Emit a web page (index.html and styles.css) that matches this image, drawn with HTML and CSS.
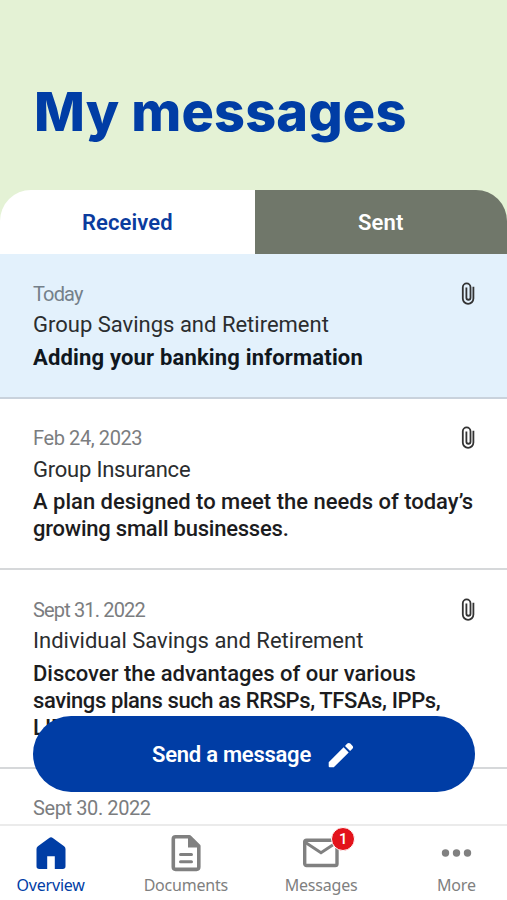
FILE: index.html
```html
<!DOCTYPE html>
<html lang="en">
<head>
<meta charset="utf-8">
<title>My messages</title>
<link rel="stylesheet" href="styles.css">
</head>
<body>
<svg width="0" height="0" class="sprite" aria-hidden="true">
  <symbol id="clip" viewBox="0 0 14 24"><path d="M12.400 4.800v11.700a5.300 5.300 0 0 1-10.600 0V5.300a3.850 3.850 0 0 1 7.700 0v10.400a2.050 2.050 0 0 1-4.100 0V5.600" fill="none" stroke="currentColor" stroke-width="1.800"/></symbol>
</svg>
<div class="app">
  <header class="hero"><h1>My messages</h1></header>
  <div class="tabs">
    <div class="tab tab-active">Received</div>
    <div class="tab tab-sent">Sent</div>
  </div>
  <main class="list">
    <article class="message unread">
      <div class="meta"><span class="date tight">Today</span><svg class="clip"><use href="#clip"/></svg></div>
      <div class="group">Group Savings and Retirement</div>
      <h2>Adding your banking information</h2>
    </article>
    <article class="message">
      <div class="meta"><span class="date">Feb 24, 2023</span><svg class="clip"><use href="#clip"/></svg></div>
      <div class="group snug">Group Insurance</div>
      <h2>A plan designed to meet the needs of today’s<br><span class="snug">growing small businesses.</span></h2>
    </article>
    <article class="message">
      <div class="meta"><span class="date tight">Sept 31. 2022</span><svg class="clip"><use href="#clip"/></svg></div>
      <div class="group">Individual Savings and Retirement</div>
      <h2>Discover the advantages of our various<br><span class="condensed">savings plans such as RRSPs, TFSAs, IPPs,</span><br>LIF</h2>
    </article>
    <article class="message">
      <div class="meta"><span class="date">Sept 30. 2022</span></div>
    </article>
  </main>
  <button class="send">
    <span>Send a message</span>
    <svg class="pencil" viewBox="0 0 26 26" fill="#fff"><path d="M.7 20.2 15.600 5.300l5.100 5.100L5.800 25.300H1.700q-1 0-1-1zM17 3.900l2.300-2.300q1.500-1.400 3 0l2.100 2.100q1.400 1.500 0 3L22.100 9z"/></svg>
  </button>
  <nav class="nav">
    <div class="item item-active">
      <svg class="icon" viewBox="0 0 40 40"><path d="M20 4.200q1 0 1.800.7l11.300 8.400q1.400 1 1.400 2.700v17.300q0 2.700-2.700 2.700h-8V23.200h-7.600V36h-8q-2.700 0-2.700-2.700V16q0-1.700 1.400-2.700l11.300-8.400Q19 4.200 20 4.200z" fill="currentColor"/></svg>
      <span>Overview</span>
    </div>
    <div class="item">
      <svg class="icon" viewBox="0 0 40 40" fill="none" stroke="currentColor" stroke-width="3.600"><path d="M23.500 3.800H9.600q-2.300 0-2.300 2.300v28q0 2.300 2.300 2.300h20.900q2.300 0 2.300-2.300V13z" stroke-linejoin="round"/><path d="M22 3v11.500h11.500z" fill="currentColor" stroke="none"/><path d="M14.500 21.500h11M14.500 28.700h11" stroke-width="3" stroke-linecap="round"/></svg>
      <span>Documents</span>
    </div>
    <div class="item">
      <div class="mail">
        <svg class="icon" viewBox="0 0 40 40" fill="none" stroke="currentColor" stroke-width="3.400"><rect x="3.700" y="7.200" width="32.300" height="25.300" rx="1.800"/><path d="M4.500 9.500 20 19.700 35.500 9.500" stroke-width="3"/></svg>
        <b class="badge">1</b>
      </div>
      <span>Messages</span>
    </div>
    <div class="item">
      <svg class="icon" viewBox="0 0 40 40" fill="currentColor"><circle cx="9.500" cy="20" r="3.700"/><circle cx="20.500" cy="20" r="3.700"/><circle cx="31.500" cy="20" r="3.700"/></svg>
      <span>More</span>
    </div>
  </nav>
</div>
</body>
</html>
```
FILE: styles.css
```css
* { box-sizing: border-box; }
body { margin: 0; font-family: Roboto, "Liberation Sans", sans-serif; }
.sprite { position: absolute; }
.app {
  position: relative;
  display: flex;
  flex-direction: column;
  height: 900px;
  overflow: hidden;
  background: #e4f2d5;
}
.hero { flex: none; height: 189.5px; padding: 79px 33px 0 34px; }
h1 {
  margin: 0;
  font: 800 54px/65px Inter, sans-serif;
  letter-spacing: .15px;
  color: #003da5;
  white-space: nowrap;
}
.tabs { flex: none; display: flex; height: 64.5px; }
.tab {
  flex: 1;
  display: flex;
  align-items: center;
  justify-content: center;
  padding-top: 2px;
  font-size: 22px;
  font-weight: 600;
}
.tab-active { flex: 0 0 254.5px; background: #fff; color: #0b3b9e; border-top-left-radius: 31px; letter-spacing: .1px; }
.tab-sent { background: #70776a; color: #fff; border-top-right-radius: 31px; letter-spacing: .1px; }
.list { flex: 1; min-height: 0; overflow: hidden; background: #fff; }
.message {
  display: flex;
  flex-direction: column;
  gap: 5.5px;
  padding: 27.5px 32px 26px 33px;
  border-bottom: 2px solid #d6d8da;
}
.unread { background: #e3f1fc; border-color: #c9d2dc; }
.meta { display: flex; justify-content: space-between; height: 24px; }
.date { font-size: 20px; line-height: 24px; letter-spacing: -.4px; color: #7b7d7f; }
.unread .date { color: #74808a; }
.date.tight { letter-spacing: -.85px; }
.clip { width: 14px; height: 24px; color: #333; }
.group { font-size: 22px; line-height: 27px; color: #2b2d2f; }
.message h2 { margin: 0; font-size: 22px; line-height: 27px; font-weight: 500; color: #1c1c1e; white-space: nowrap; }
.message.unread h2 { font-weight: 700; letter-spacing: .17px; color: #10171e; }
.snug { letter-spacing: -.22px; }
.condensed { letter-spacing: -.39px; }
.send {
  position: absolute;
  left: 33px;
  top: 716px;
  display: flex;
  align-items: center;
  justify-content: center;
  gap: 17px;
  width: 442px;
  height: 76px;
  padding: 1px 2px 0 0;
  border: 0;
  border-radius: 38px;
  background: #003da5;
  color: #fff;
  font: 600 22px/26px Roboto, sans-serif;
  letter-spacing: -.25px;
}
.pencil { width: 26px; height: 26px; }
.nav {
  flex: none;
  display: grid;
  grid-template-columns: repeat(4, 1fr);
  height: 76.5px;
  padding-top: 7px;
  margin: 0 -17px 0 -17px;
  border-top: 2px solid #ebebeb;
  background: #fff;
  color: #808080;
}
.item {
  display: flex;
  flex-direction: column;
  align-items: center;
  font: 400 16px/24px "Noto Sans", sans-serif;
  letter-spacing: -.2px;
}
.item-active { color: #003da5; }
.icon { display: block; width: 40px; height: 40px; }
.mail { position: relative; }
.badge {
  position: absolute;
  left: 30px;
  top: -6px;
  width: 24px;
  height: 24px;
  border: 1px solid #fff;
  border-radius: 50%;
  background: #e3121a;
  color: #fff;
  font: 500 15px/22px Roboto, sans-serif;
  text-align: center;
}
```
